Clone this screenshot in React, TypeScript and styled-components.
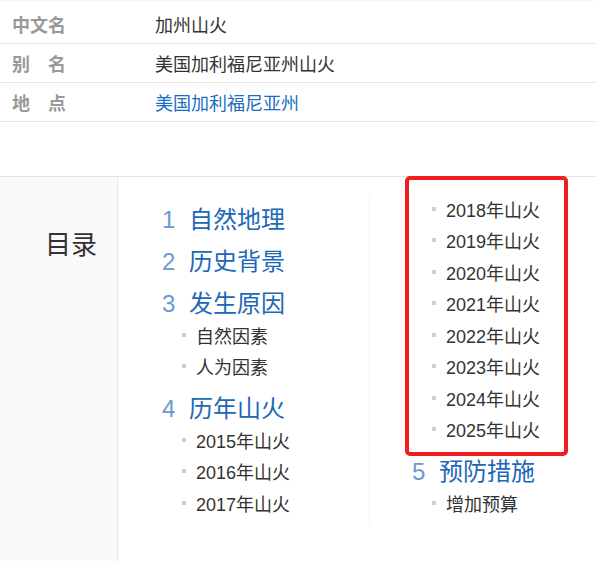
import styled, { createGlobalStyle } from "styled-components";

const GlobalStyle = createGlobalStyle`
  html, body {
    margin: 0;
    padding: 0;
    background: #fff;
  }
  body {
    font-family: "Liberation Sans", "Noto Sans CJK SC", sans-serif;
    color: #333;
  }
`;

const Page = styled.div`
  width: 595px;
  height: 561px;
  overflow: hidden;
  background: #fff;
`;

const InfoTable = styled.div`
  padding-top: 4px;
  border-top: 1px dotted #f0f0f0;
`;

const InfoRow = styled.div`
  display: grid;
  grid-template-columns: 155px 1fr;
  align-items: center;
  height: 38px;
  border-bottom: 1px dotted #d0d0d0;
  font-size: 18px;
`;

const InfoLabel = styled.span`
  display: inline-block;
  width: 54px;
  margin-left: 12px;
  font-weight: bold;
  color: #999;
  text-align: justify;
  text-align-last: justify;
`;

const InfoValue = styled.span<{ $link?: boolean }>`
  color: ${(p) => (p.$link ? "#1a6ec2" : "#333")};
`;

const Catalog = styled.div`
  display: flex;
  margin-top: 54px;
  border-top: 1px solid #e3e3e3;
  height: 400px;
`;

const CatalogSide = styled.div`
  width: 97px;
  padding: 55px 20px 0 0;
  text-align: right;
  background: #fafafa;
  border-right: 1px solid #e8e8e8;
  font-size: 26px;
  line-height: 26px;
  color: #333;
`;

const CatalogBody = styled.div`
  display: flex;
  align-items: flex-start;
  padding: 18px 0 0 44px;
`;

const Column = styled.div<{ $divided?: boolean }>`
  position: relative;
  width: ${(p) => (p.$divided ? "160px" : "207px")};
  padding-left: ${(p) => (p.$divided ? "42px" : "0")};
  padding-bottom: 4px;
  border-left: ${(p) => (p.$divided ? "1px solid #f3f3f3" : "none")};
`;

const Heading = styled.div`
  display: flex;
  margin-top: 8px;
  height: 34px;
  line-height: 34px;
  font-size: 24px;
  white-space: nowrap;
`;

const HeadingIndex = styled.span`
  width: 27px;
  flex: none;
  color: #6a9ad6;
`;

const HeadingText = styled.span`
  color: #2167b8;
`;

const SubItem = styled.div`
  box-sizing: border-box;
  display: flex;
  align-items: center;
  height: 31.5px;
  padding: 0 0 4px 20px;
  font-size: 18px;
  color: #333;
  white-space: nowrap;

  &::before {
    content: "";
    width: 4px;
    height: 4px;
    margin-right: 10px;
    background: #cfcfcf;
    flex: none;
  }
`;

const Highlight = styled.div`
  position: absolute;
  left: 35px;
  top: -19px;
  width: 155px;
  height: 272px;
  border: 4px solid #f41d1d;
  border-radius: 5px;
  pointer-events: none;
`;

type Entry = { index?: number; text: string };

const column1: Entry[] = [
  { index: 1, text: "自然地理" },
  { index: 2, text: "历史背景" },
  { index: 3, text: "发生原因" },
  { text: "自然因素" },
  { text: "人为因素" },
  { index: 4, text: "历年山火" },
  { text: "2015年山火" },
  { text: "2016年山火" },
  { text: "2017年山火" },
];

const column2: Entry[] = [
  { text: "2018年山火" },
  { text: "2019年山火" },
  { text: "2020年山火" },
  { text: "2021年山火" },
  { text: "2022年山火" },
  { text: "2023年山火" },
  { text: "2024年山火" },
  { text: "2025年山火" },
  { index: 5, text: "预防措施" },
  { text: "增加预算" },
];

const renderEntry = (entry: Entry) =>
  entry.index ? (
    <Heading key={entry.text}>
      <HeadingIndex>{entry.index}</HeadingIndex>
      <HeadingText>{entry.text}</HeadingText>
    </Heading>
  ) : (
    <SubItem key={entry.text}>{entry.text}</SubItem>
  );

const App = (): JSX.Element => {
  return (
    <Page>
      <GlobalStyle />
      <InfoTable>
        <InfoRow>
          <InfoLabel>中文名</InfoLabel>
          <InfoValue>加州山火</InfoValue>
        </InfoRow>
        <InfoRow>
          <InfoLabel>别名</InfoLabel>
          <InfoValue>美国加利福尼亚州山火</InfoValue>
        </InfoRow>
        <InfoRow>
          <InfoLabel>地点</InfoLabel>
          <InfoValue $link>美国加利福尼亚州</InfoValue>
        </InfoRow>
      </InfoTable>
      <Catalog>
        <CatalogSide>目录</CatalogSide>
        <CatalogBody>
          <Column>{column1.map(renderEntry)}</Column>
          <Column $divided>
            {column2.map(renderEntry)}
            <Highlight />
          </Column>
        </CatalogBody>
      </Catalog>
    </Page>
  );
};

export default App;
